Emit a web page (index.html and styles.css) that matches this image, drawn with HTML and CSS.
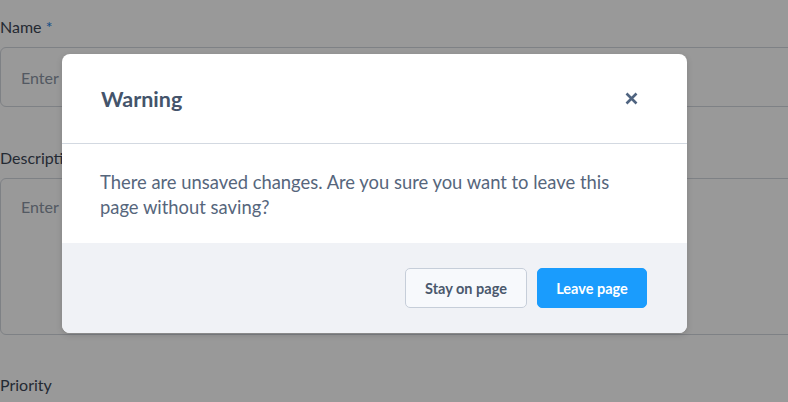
FILE: index.html
```html
<!DOCTYPE html>
<html>
<head>
<meta charset="utf-8">
<link rel="stylesheet" href="styles.css">
</head>
<body>
<div class="page">
  <form class="form">
    <div class="field">
      <label class="label">Name <span class="req">*</span></label>
      <div class="input">Enter a name</div>
    </div>
    <div class="field">
      <label class="label">Description</label>
      <div class="input textarea"><span class="ph">Enter a description</span></div>
    </div>
    <div class="field">
      <label class="label">Priority</label>
    </div>
  </form>
</div>
<div class="overlay">
  <div class="modal">
    <div class="modal-header">
      <h2 class="modal-title">Warning</h2>
      <button class="close" type="button" aria-label="Close">
        <svg width="13" height="13" viewBox="0 0 13 13"><path d="M1.5 1.5 L11.5 11.5 M11.5 1.5 L1.5 11.5" stroke="#4f6480" stroke-width="2.6" stroke-linecap="butt" fill="none"/></svg>
      </button>
    </div>
    <div class="modal-body">
      <p>There are unsaved changes. Are you sure you want to leave this page without saving?</p>
    </div>
    <div class="modal-footer">
      <button class="btn btn-secondary" type="button">Stay on page</button>
      <button class="btn btn-primary" type="button">Leave page</button>
    </div>
  </div>
</div>
</body>
</html>
```
FILE: styles.css
```css
* { box-sizing: border-box; }
html, body { margin: 0; padding: 0; }
body {
  width: 788px;
  height: 402px;
  overflow: hidden;
  background: #fff;
  font-family: Lato, "Noto Sans", sans-serif;
  position: relative;
}
.page { padding-top: 17px; }
.form { width: 820px; display: flex; flex-direction: column; }
.field { display: flex; flex-direction: column; }
.label {
  font-size: 16px;
  line-height: 20px;
  color: #3d4756;
  margin-bottom: 10px;
}
.req { color: #1a7fe0; }
.input {
  height: 60px;
  border: 1px solid #d2d7de;
  border-radius: 6px;
  padding: 0 20px;
  display: flex;
  align-items: center;
  font-size: 16px;
  color: #8a94a3;
  margin-bottom: 41px;
}
.textarea {
  height: 157px;
  align-items: flex-start;
  padding-top: 18px;
  margin-bottom: 40px;
}
.ph { line-height: 20px; }
.overlay {
  position: absolute;
  inset: 0;
  background: rgba(0,0,0,0.4);
}
.modal {
  position: absolute;
  left: 62px;
  top: 54px;
  width: 625px;
  background: #fff;
  border-radius: 8px;
  overflow: hidden;
  box-shadow: 0 2px 6px rgba(0,0,0,0.15);
}
.modal-header {
  height: 90px;
  display: flex;
  align-items: center;
  justify-content: space-between;
  padding: 0 49px 0 39px;
  border-bottom: 1px solid #d3d9e1;
}
.modal-title {
  margin: 0;
  font-size: 21.5px;
  font-weight: 700;
  color: #44546b;
}
.close {
  border: 0;
  background: none;
  padding: 0;
  width: 13px;
  height: 13px;
  display: flex;
}
.modal-body {
  height: 99px;
  padding: 26px 38px 0 38px;
}
.modal-body p {
  margin: 0;
  max-width: 540px;
  font-size: 18.4px;
  line-height: 25px;
  color: #56667c;
}
.modal-footer {
  height: 90px;
  background: #f0f2f6;
  display: flex;
  justify-content: flex-end;
  align-items: center;
  gap: 10px;
  padding: 0 40px;
}
.btn {
  height: 40px;
  border-radius: 5px;
  font-family: inherit;
  font-size: 14.5px;
  font-weight: 700;
  padding: 0;
  white-space: nowrap;
}
.btn-secondary {
  width: 122px;
  background: #f7f9fc;
  border: 1px solid #c6ced9;
  color: #4a586c;
}
.btn-primary {
  width: 110px;
  background: #1a9cfd;
  border: 1px solid #1a9cfd;
  color: #fff;
}
```
